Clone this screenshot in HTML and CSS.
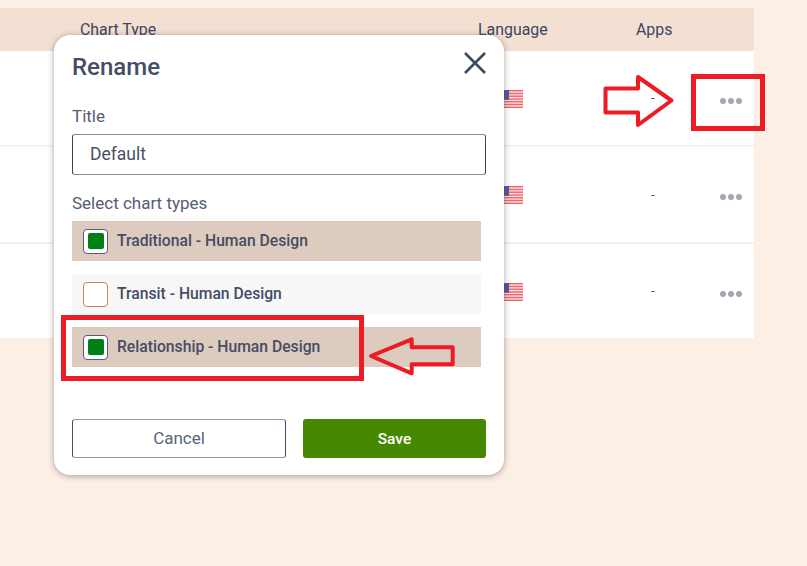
FILE: index.html
```html
<!DOCTYPE html>
<html lang="en">
<head>
<meta charset="utf-8">
<title>Rename</title>
<link rel="stylesheet" href="styles.css">
</head>
<body>
<svg width="0" height="0" class="defs">
  <symbol id="flag" viewBox="0 0 28 18">
    <rect width="28" height="18" fill="#fbe3e3"/>
    <g fill="#f0626c">
      <rect y="0" width="28" height="1.4"/>
      <rect y="2.8" width="28" height="1.4"/>
      <rect y="5.5" width="28" height="1.4"/>
      <rect y="8.3" width="28" height="1.4"/>
      <rect y="11" width="28" height="1.4"/>
      <rect y="13.8" width="28" height="1.4"/>
      <rect y="16.6" width="28" height="1.4"/>
    </g>
    <rect width="14" height="9.7" fill="#4f58a0"/>
  </symbol>
</svg>
<main class="table">
  <div class="row head">
    <div class="c-type">Chart Type</div>
    <div class="c-lang">Language</div>
    <div class="c-apps">Apps</div>
    <div class="c-more"></div>
  </div>
  <div class="row body first">
    <div class="c-type"></div>
    <div class="c-lang"><svg class="flag"><use href="#flag"/></svg></div>
    <div class="c-apps dash">-</div>
    <div class="c-more"><span class="dots"><i></i><i></i><i></i></span></div>
  </div>
  <div class="row body">
    <div class="c-type"></div>
    <div class="c-lang"><svg class="flag"><use href="#flag"/></svg></div>
    <div class="c-apps dash">-</div>
    <div class="c-more"><span class="dots"><i></i><i></i><i></i></span></div>
  </div>
  <div class="row body last">
    <div class="c-type"></div>
    <div class="c-lang"><svg class="flag"><use href="#flag"/></svg></div>
    <div class="c-apps dash">-</div>
    <div class="c-more"><span class="dots"><i></i><i></i><i></i></span></div>
  </div>
</main>

<section class="modal">
  <header class="modal-head">
    <h2>Rename</h2>
    <svg class="close" width="24" height="24" viewBox="0 0 24 24"><path d="M2 2 L22 22 M22 2 L2 22"/></svg>
  </header>
  <label class="field-label">Title</label>
  <div class="input">Default</div>
  <p class="field-label types">Select chart types</p>
  <ul class="options">
    <li class="option on"><span class="check"><i></i></span><span class="opt-text">Traditional - Human Design</span></li>
    <li class="option"><span class="check"></span><span class="opt-text">Transit - Human Design</span></li>
    <li class="option on"><span class="check"><i></i></span><span class="opt-text">Relationship - Human Design</span></li>
  </ul>
  <div class="actions">
    <button class="btn cancel">Cancel</button>
    <button class="btn save">Save</button>
  </div>
</section>

<svg class="marks" width="807" height="566" viewBox="0 0 807 566">
  <g fill="none" stroke="#ed1c24">
    <rect x="63.5" y="317.5" width="298" height="61" stroke-width="5"/>
    <rect x="693.5" y="76.5" width="69" height="52" stroke-width="5"/>
    <path stroke-width="4" stroke-linejoin="round" d="M605.5 88.5H638V77L671.5 100.5 638 125V112.5H605.5Z"/>
    <path stroke-width="4" stroke-linejoin="round" d="M371 356 411.7 339.3V347.3H452.7V364.3H411.7V373.3Z"/>
  </g>
</svg>
</body>
</html>
```
FILE: styles.css
```css
* { box-sizing: border-box; }
html, body { margin: 0; padding: 0; }
body {
  width: 807px;
  height: 566px;
  overflow: hidden;
  position: relative;
  background: #fcefe6;
  font-family: Roboto, "Liberation Sans", sans-serif;
  color: #3c4660;
  padding-top: 8px;
}
.defs { position: absolute; }
.table { width: 754px; background: #fff; }
.row { display: grid; grid-template-columns: 478px 158px 64px 54px; }
.head {
  height: 43px;
  background: #f3e0d3;
  font-size: 15.9px;
  font-weight: 400;
  line-height: 43px;
}
.head .c-type { padding-left: 80px; }
.body { height: 97px; border-bottom: 2px solid #fcefe6; align-items: center; }
.body.first { height: 96px; }
.body.last { height: 94px; border-bottom: 0; }
.c-lang { position: relative; }
.flag { display: block; width: 28px; height: 18px; margin: 1px 0 0 17px; }
.dash { font-size: 13px; padding-left: 15px; line-height: 14px; }
.c-more { display: flex; padding-left: 20px; }
.dots { display: flex; gap: 2px; margin-top: 5px; }
.dots i { width: 6px; height: 6px; border-radius: 50%; background: #a5a5b3; }

.modal {
  position: absolute;
  left: 54px;
  top: 35px;
  width: 450px;
  height: 440px;
  padding: 0 18px;
  background: #fff;
  border-radius: 16px;
  box-shadow: 0 1px 6px rgba(70, 50, 40, .45);
}
.modal-head {
  display: flex;
  justify-content: space-between;
  align-items: center;
  height: 62px;
}
.modal-head h2 { margin: 2px 0 0; font-size: 24px; font-weight: 500; color: #454d64; }
.close { margin: -6px -1px 0 0; }
.close path { stroke: #3b4c5f; stroke-width: 2.6; fill: none; }
.field-label { display: block; margin: 0; font-size: 17px; line-height: 20px; color: #565c72; }
.modal-head + .field-label { margin-top: 9px; }
.input {
  margin-top: 8px;
  height: 41px;
  padding-left: 17px;
  border: 1px solid #3a4256;
  border-top-color: #858a98;
  border-bottom-color: #858a98;
  border-radius: 3px;
  font-size: 17.5px;
  line-height: 39px;
  color: #4a5066;
}
.types { margin-top: 18px; }
.options { list-style: none; margin: 8px 5px 0 0; padding: 0; display: flex; flex-direction: column; gap: 13px; }
.option {
  display: flex;
  align-items: center;
  gap: 9px;
  height: 40px;
  padding-left: 11px;
  background: #f7f7f7;
  font-size: 15.7px;
  font-weight: 500;
  color: #454d64;
}
.opt-text { margin-top: -2px; }
.option.on { background: #decbbf; }
.check {
  display: flex;
  align-items: center;
  justify-content: center;
  width: 25px;
  height: 25px;
  background: #fff;
  border: 1px solid #c4846a;
  border-radius: 4px;
}
.on .check { border-color: #565c72; }
.check i { width: 16px; height: 16px; border-radius: 2px; background: #008116; }
.actions { display: flex; gap: 17px; margin-top: 52px; }
.btn {
  height: 39px;
  border-radius: 3px;
  font-family: inherit;
  padding: 0;
}
.cancel { flex: 0 0 214px; background: #fff; border: 1px solid #3f5166; border-top-color: #8d99a8; border-bottom-color: #8d99a8; color: #56657a; font-size: 17px; padding-bottom: 2px; }
.save { flex: 1; background: #458900; border: 0; color: #fff; font-weight: 500; font-size: 15.5px; }
.marks { position: absolute; left: 0; top: 0; pointer-events: none; }
```
